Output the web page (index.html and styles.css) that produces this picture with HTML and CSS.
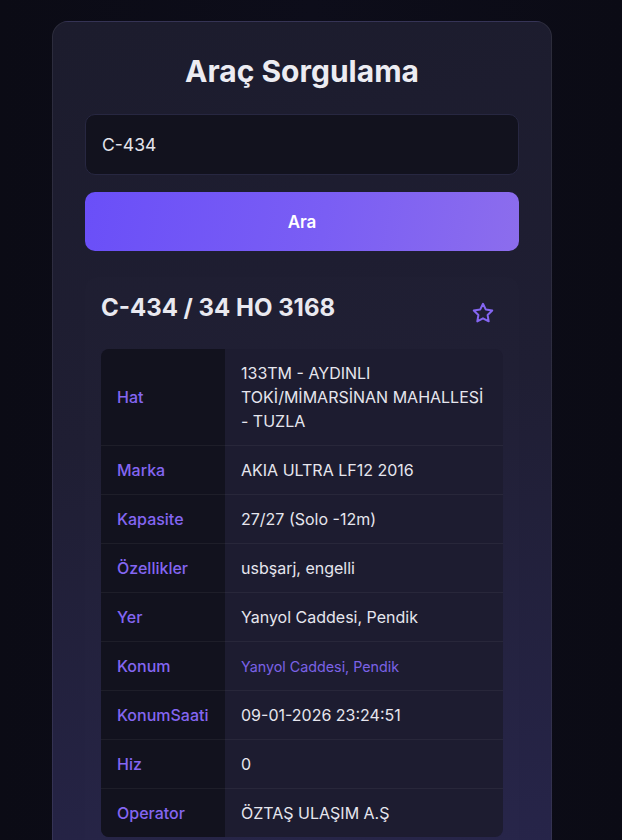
FILE: index.html
```html
<!DOCTYPE html>
<html lang="tr">
<head>
<meta charset="utf-8">
<title>Araç Sorgulama</title>
<link rel="stylesheet" href="styles.css">
</head>
<body>
<div class="page">
  <main class="card">
    <h1 class="title">Araç Sorgulama</h1>
    <input class="search" type="text" value="C-434">
    <button class="search-btn">Ara</button>
    <section class="result">
      <div class="result-head">
        <h2 class="result-title">C-434 / 34 HO 3168</h2>
        <button class="fav" aria-label="Favori">
          <svg width="24" height="24" viewBox="0 0 24 24" fill="none" stroke="currentColor" stroke-width="2" stroke-linecap="round" stroke-linejoin="round"><path d="M12 2.8l2.85 5.78 6.38.93-4.62 4.5 1.09 6.35L12 17.36l-5.7 3 1.09-6.35-4.62-4.5 6.38-.93z"/></svg>
        </button>
      </div>
      <table class="info">
        <tr><th>Hat</th><td>133TM - AYDINLI TOKİ/MİMARSİNAN MAHALLESİ - TUZLA</td></tr>
        <tr><th>Marka</th><td>AKIA ULTRA LF12 2016</td></tr>
        <tr><th>Kapasite</th><td>27/27 (Solo -12m)</td></tr>
        <tr><th>Özellikler</th><td>usbşarj, engelli</td></tr>
        <tr><th>Yer</th><td>Yanyol Caddesi, Pendik</td></tr>
        <tr><th>Konum</th><td><a class="link" href="#">Yanyol Caddesi, Pendik</a></td></tr>
        <tr><th>KonumSaati</th><td>09-01-2026 23:24:51</td></tr>
        <tr><th>Hiz</th><td>0</td></tr>
        <tr><th>Operator</th><td>ÖZTAŞ ULAŞIM A.Ş</td></tr>
      </table>
    </section>
  </main>
</div>
</body>
</html>
```
FILE: styles.css
```css
* { box-sizing: border-box; }
html, body {
  margin: 0;
  background: #0c0c18;
  font-family: Inter, "Noto Sans", sans-serif;
  color: #e6e6ee;
}
body {
  background: linear-gradient(90deg, #0b0b15 0%, #0d0d1a 50%, #0b0b15 100%);
  min-height: 840px;
}
.page {
  padding: 21px 70px 0 52px;
}
.card {
  width: 500px;
  border: 1px solid rgba(255,255,255,0.07);
  border-radius: 16px;
  background: linear-gradient(170deg, #1c1c2d 0%, #1f1e33 45%, #27254b 100%);
  padding: 32px 32px 32px;
  display: flex;
  flex-direction: column;
}
.title {
  margin: 0 0 26px;
  font-size: 30px;
  line-height: 34px;
  font-weight: 700;
  text-align: center;
  color: #ececf2;
}
.search {
  height: 61px;
  width: 100%;
  background: #12121e;
  border: 1px solid #272741;
  border-radius: 10px;
  padding: 0 16px;
  font-family: Inter, sans-serif;
  font-size: 17.5px;
  color: #e4e4ec;
  outline: none;
}
.search-btn {
  margin-top: 17px;
  height: 59px;
  width: 100%;
  border: 0;
  border-radius: 10px;
  background: linear-gradient(100deg, #6a4ff8 0%, #7a5ef4 55%, #8c6ded 100%);
  color: #fff;
  font-family: Inter, sans-serif;
  font-size: 17px;
  font-weight: 600;
}
.result {
  margin-top: 26px;
  padding: 16px;
  border-radius: 12px;
  background: rgba(255,255,255,0.006);
}
.result-head {
  display: flex;
  justify-content: space-between;
  align-items: flex-start;
  margin-bottom: 16px;
}
.result-title {
  margin: 0;
  font-size: 24px;
  line-height: 29px;
  font-weight: 700;
  color: #e9e9f0;
}
.fav {
  width: 40px;
  height: 40px;
  border: 0;
  background: transparent;
  color: #8466f2;
  padding: 0;
  display: flex;
  align-items: center;
  justify-content: center;
}
.info {
  width: 100%;
  border-collapse: separate;
  border-spacing: 0;
  border-radius: 8px;
  overflow: hidden;
  background: #1d1c30;
}
.info th, .info td {
  padding: 12px 16px;
  line-height: 24px;
  font-size: 16px;
  text-align: left;
  vertical-align: middle;
  border-bottom: 1px solid rgba(255,255,255,0.05);
}
.info tr:last-child th, .info tr:last-child td { border-bottom: 0; }
.info th {
  width: 124px;
  background: #12121e;
  color: #8466f2;
  font-weight: 500;
}
.info td {
  color: #e6e6ee;
  font-weight: 400;
}
.link {
  color: #7b62e6;
  font-size: 14.3px;
  line-height: 1;
  text-decoration: none;
}
```
